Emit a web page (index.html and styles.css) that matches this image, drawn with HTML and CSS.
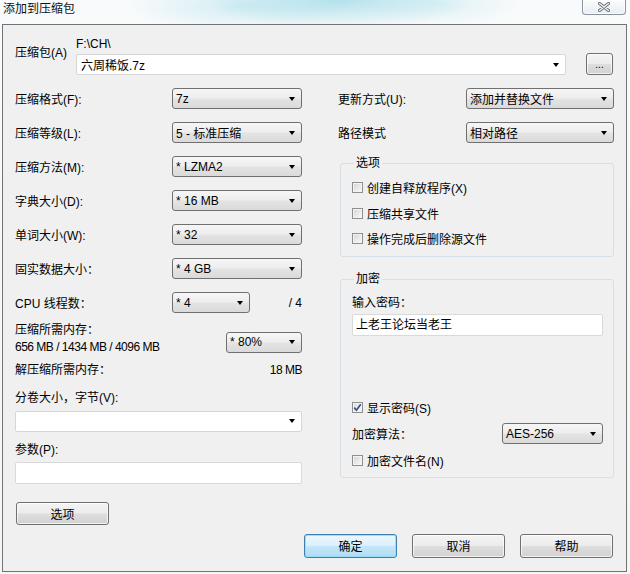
FILE: index.html
```html
<!DOCTYPE html>
<html lang="zh-CN">
<head>
<meta charset="utf-8">
<title>添加到压缩包</title>
<link rel="stylesheet" href="styles.css">
</head>
<body>
<div class="window">
  <div class="titlebar">
    <span class="title">添加到压缩包</span>
    <div class="close">
      <svg width="12" height="10" viewBox="0 0 12 10">
        <path d="M1.5 1.5 L10.5 8.5 M10.5 1.5 L1.5 8.5" stroke="#6d747c" stroke-width="3.2" stroke-linecap="round" fill="none"/>
        <path d="M1.5 1.5 L10.5 8.5 M10.5 1.5 L1.5 8.5" stroke="#f4f6f8" stroke-width="1.2" stroke-linecap="round" fill="none"/>
      </svg>
    </div>
  </div>
  <div class="panel">
    <div class="archive">
      <div class="archive-label">压缩包(A)</div>
      <div class="archive-main">
        <div class="path">F:\CH\</div>
        <div class="combo edit"><span>六周稀饭.7z</span><i class="arrow"></i></div>
      </div>
      <div class="btn browse">...</div>
    </div>

    <div class="columns">
      <div class="left">
        <div class="row"><span>压缩格式(F):</span><div class="sel"><span>7z</span><i class="arrow"></i></div></div>
        <div class="row"><span>压缩等级(L):</span><div class="sel"><span>5 - 标准压缩</span><i class="arrow"></i></div></div>
        <div class="row"><span>压缩方法(M):</span><div class="sel"><span>* LZMA2</span><i class="arrow"></i></div></div>
        <div class="row"><span>字典大小(D):</span><div class="sel"><span>* 16 MB</span><i class="arrow"></i></div></div>
        <div class="row"><span>单词大小(W):</span><div class="sel"><span>* 32</span><i class="arrow"></i></div></div>
        <div class="row"><span>固实数据大小：</span><div class="sel"><span>* 4 GB</span><i class="arrow"></i></div></div>
        <div class="row"><span class="grow">CPU 线程数：</span><div class="sel cpu"><span>* 4</span><i class="arrow"></i></div><span class="threads">/ 4</span></div>
        <div class="mem">
          <div class="mem-text"><div>压缩所需内存：</div><div class="num">656 MB / 1434 MB / 4096 MB</div></div>
          <div class="sel memsel"><span>* 80%</span><i class="arrow"></i></div>
        </div>
        <div class="decomp"><span>解压缩所需内存：</span><span class="num">18 MB</span></div>
        <div class="field-label vol-label">分卷大小，字节(V):</div>
        <div class="combo edit vol"><span></span><i class="arrow"></i></div>
        <div class="field-label param-label">参数(P):</div>
        <div class="textbox param"></div>
        <div class="btn options">选项</div>
      </div>

      <div class="right">
        <div class="row"><span>更新方式(U):</span><div class="sel wide"><span>添加并替换文件</span><i class="arrow"></i></div></div>
        <div class="row"><span>路径模式</span><div class="sel wide"><span>相对路径</span><i class="arrow"></i></div></div>

        <fieldset class="group g-options">
          <legend>选项</legend>
          <div class="check"><i class="cb"></i><span>创建自释放程序(X)</span></div>
          <div class="check c2"><i class="cb"></i><span>压缩共享文件</span></div>
          <div class="check c3"><i class="cb"></i><span>操作完成后删除源文件</span></div>
        </fieldset>

        <fieldset class="group g-encrypt">
          <legend>加密</legend>
          <div class="pw-label">输入密码：</div>
          <div class="textbox pw">上老王论坛当老王</div>
          <div class="check show"><i class="cb checked">
            <svg width="9" height="9" viewBox="0 0 9 9"><path d="M1.2 4.6 L3.4 7.2 L7.8 1.2" stroke="#3b4f8f" stroke-width="1.7" fill="none"/></svg>
          </i><span>显示密码(S)</span></div>
          <div class="row algo"><span>加密算法：</span><div class="sel aes"><span>AES-256</span><i class="arrow"></i></div></div>
          <div class="check encname"><i class="cb"></i><span>加密文件名(N)</span></div>
        </fieldset>
      </div>
    </div>

    <div class="footer">
      <div class="btn default">确定</div>
      <div class="btn">取消</div>
      <div class="btn">帮助</div>
    </div>
  </div>
</div>
</body>
</html>
```

FILE: styles.css
```css
* { box-sizing: border-box; }
html, body { margin: 0; padding: 0; }
body {
  width: 630px;
  height: 574px;
  overflow: hidden;
  font-family: "Liberation Sans", "Noto Sans CJK SC", sans-serif;
  font-size: 12px;
  color: #000;
  background:
    radial-gradient(ellipse 130px 30px at 340px 0px, rgba(150, 215, 230, 0.7), rgba(150, 215, 230, 0) 100%),
    radial-gradient(ellipse 110px 26px at 240px 6px, rgba(185, 228, 238, 0.6), rgba(185, 228, 238, 0) 100%),
    radial-gradient(ellipse 80px 22px at 440px 4px, rgba(200, 234, 242, 0.5), rgba(200, 234, 242, 0) 100%),
    linear-gradient(#f8fafb, #f3f6f8);
}
.window { width: 630px; height: 574px; }

.titlebar {
  height: 24px;
  display: flex;
  justify-content: space-between;
  align-items: flex-start;
  padding-left: 3px;
}
.title { line-height: 14px; margin-top: 2px; color: #111; }
.close {
  width: 44px;
  height: 15px;
  margin-right: 4px;
  border: 1px solid #8a939c;
  border-top: none;
  border-radius: 0 0 4px 4px;
  background: linear-gradient(#fbfcfd, #e9edf1);
  display: flex;
  align-items: center;
  justify-content: center;
  box-shadow: inset 0 0 0 1px rgba(255,255,255,0.8);
}

.panel {
  margin-left: 2px;
  width: 625px;
  height: 548px;
  border: 1px solid #737373;
  background: #f0f0f0;
  padding: 12px 12px 0 12px;
}

/* archive row */
.archive { display: flex; align-items: flex-start; }
.archive-label { width: 61px; margin-top: 9px; line-height: 14px; }
.archive-main { width: 490px; }
.path { line-height: 14px; height: 14px; margin-bottom: 3px; }
.browse {
  margin-left: 20px;
  margin-top: 16px;
  width: 27px;
  height: 22px;
  line-height: 22px;
  font-size: 10px;
  padding-top: 2px;
}

/* controls */
.sel, .combo {
  display: flex;
  align-items: center;
  justify-content: space-between;
  height: 21px;
  border-radius: 3px;
  padding: 0 6px 0 3px;
  white-space: nowrap;
}
.sel {
  width: 130px;
  border: 1px solid #707070;
  background: linear-gradient(#f6f6f6 0%, #eeeeee 45%, #e3e3e3 55%, #dadada 100%);
}
.combo.edit {
  background: #fff;
  border: 1px solid #d6d6d6;
  border-radius: 2px;
  padding-left: 4px;
}
.arrow {
  display: block;
  width: 0;
  height: 0;
  border-left: 3.5px solid transparent;
  border-right: 3.5px solid transparent;
  border-top: 4px solid #000;
  flex: none;
}
.textbox {
  background: #fff;
  border: 1px solid #d9d9d9;
  border-radius: 2px;
  height: 22px;
  line-height: 20px;
  padding-left: 3px;
}

.btn {
  display: flex;
  align-items: center;
  justify-content: center;
  border: 1px solid #707070;
  border-radius: 3px;
  background: linear-gradient(#f4f4f4 0%, #ececec 48%, #dedede 52%, #d1d1d1 100%);
  box-shadow: inset 0 0 0 1px rgba(255, 255, 255, 0.7);
}
.btn.default {
  border-color: #3c7fb1;
  background: linear-gradient(#edf7fd 0%, #dcf0fb 48%, #c4e6f8 52%, #b1dcf4 100%);
  box-shadow: inset 0 0 0 1px rgba(150, 220, 250, 0.9);
}

/* columns */
.columns { display: flex; margin-top: 13px; }
.left { width: 287px; }
.right { width: 276px; margin-left: 36px; }

.row {
  display: flex;
  align-items: center;
  justify-content: space-between;
  height: 21px;
}
.row + .row { margin-top: 13px; }
.grow { flex: 1; }
.sel.cpu { width: 78px; }
.threads { width: 52px; text-align: right; }
.num { letter-spacing: -0.5px; }

.mem {
  display: flex;
  justify-content: space-between;
  margin-top: 8.5px;
  line-height: 17px;
}
.sel.memsel { width: 76px; align-self: flex-end; margin-bottom: 3px; }
.decomp {
  display: flex;
  justify-content: space-between;
  margin-top: 6px;
  line-height: 17px;
}
.field-label { line-height: 17px; }
.vol-label { margin-top: 11px; }
.combo.vol { margin-top: 4px; width: 287px; }
.param-label { margin-top: 10.5px; }
.textbox.param { margin-top: 2.5px; width: 287px; }
.btn.options { margin-top: 18px; margin-left: 1px; width: 93px; height: 23px; }

.sel.wide { width: 148px; }

/* group boxes */
.group {
  margin: 0 0 0 2px;
  width: 274px;
  border: 1px solid #d5dfe5;
  border-radius: 3px;
  padding: 9px 10px 10px 11px;
  min-width: 0;
}
.group legend {
  padding: 0 2px;
  margin-left: 2px;
  line-height: 14px;
  font-size: 12px;
}
.g-options { margin-top: 13px; }
.g-encrypt { margin-top: 15px; padding-top: 10px; padding-bottom: 9px; }

.check {
  display: flex;
  align-items: center;
  height: 16px;
}
.check.c2 { margin-top: 10px; }
.check.c3 { margin-top: 9px; }
.cb {
  display: flex;
  align-items: center;
  justify-content: center;
  width: 11px;
  height: 11px;
  margin-right: 4px;
  border: 1px solid #8f8f8f;
  background: linear-gradient(135deg, #d2d2d2 0%, #ececec 60%, #f8f8f8 100%);
  box-shadow: inset 0 0 0 1px #f4f4f4;
  flex: none;
}
.cb.checked { background: linear-gradient(135deg, #dcdcdc 0%, #f2f2f2 70%, #fafafa 100%); }

.pw-label { line-height: 14px; }
.textbox.pw { margin-top: 4px; width: 251px; }
.check.show { margin-top: 63px; }
.row.algo { margin-top: 8px; }
.sel.aes { width: 101px; }
.check.encname { margin-top: 8px; }

/* footer */
.footer {
  display: flex;
  justify-content: flex-end;
  gap: 15px;
  margin-top: 9px;
  margin-right: 1px;
}
.footer .btn { width: 93px; height: 24px; }
```
